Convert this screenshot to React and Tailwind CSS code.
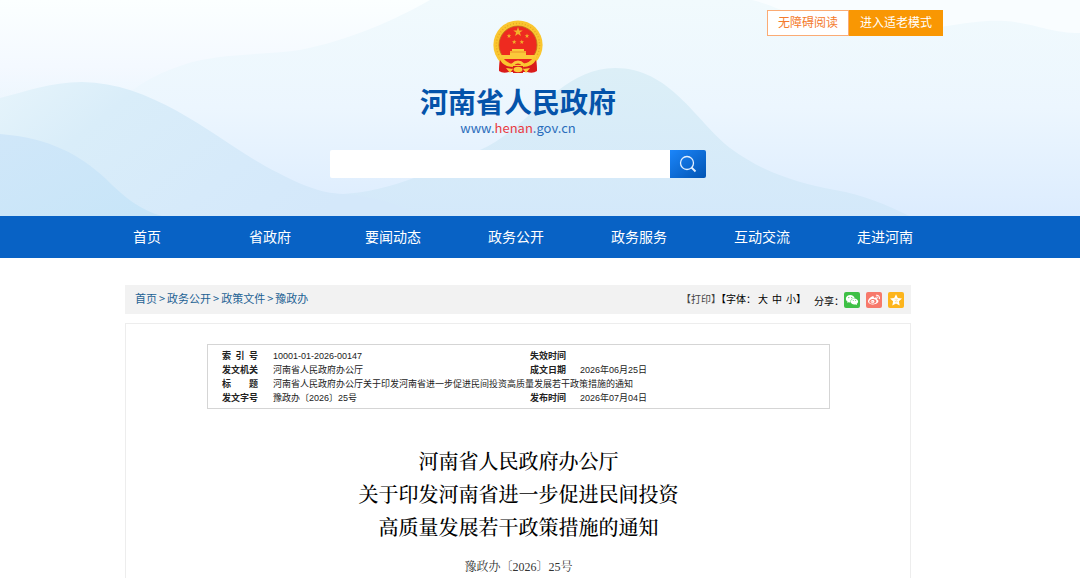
import React from 'react';
import { AiFillWechat } from 'react-icons/ai';
import { FaWeibo } from 'react-icons/fa';

const NAV = ['首页', '省政府', '要闻动态', '政务公开', '政务服务', '互动交流', '走进河南'];
const CRUMBS = ['首页', '政务公开', '政策文件', '豫政办'];

const Star = ({ x, y, r }) => {
  const pts = Array.from({ length: 10 }, (_, i) => {
    const a = (Math.PI / 5) * i - Math.PI / 2;
    const d = i % 2 ? r * 0.4 : r;
    return `${x + d * Math.cos(a)},${y + d * Math.sin(a)}`;
  }).join(' ');
  return <polygon points={pts} />;
};

const Emblem = () => (
  <svg viewBox="0 0 50 54" className="w-[50px] h-[54px]" role="img" aria-label="国徽">
    <path d="M7 36 L43 36 L44 51 Q40 54 34 52 L16 52 Q10 54 6 51 Z" fill="#dd1c1c" />
    <circle cx="25" cy="25" r="24.6" fill="#fac62f" />
    <circle cx="25" cy="25" r="21.6" fill="none" stroke="#e9a821" strokeWidth="1.4" strokeDasharray="1 2" />
    <circle cx="25" cy="25" r="19" fill="#ee2a20" stroke="#b9731b" strokeWidth="0.8" />
    <g fill="#f3b32b">
      <Star x={25} y={12} r={5} />
      <Star x={16} y={16} r={2.4} />
      <Star x={34} y={16} r={2.4} />
      <Star x={21.2} y={22} r={2.4} />
      <Star x={28.8} y={22} r={2.4} />
    </g>
    <path d="M19 29 h12 v2 h2 v4 h11 l-1 4 H7 l-1 -4 h11 v-4 h2 z" fill="#fbc93a" />
    <path d="M17 32 h16" stroke="#e57d22" strokeWidth="0.7" />
    <path d="M10 39 h30 l-5 4 -5 2 h-10 l-6 -2 z" fill="#e9251f" />
    <path d="M8 38 Q14 46 21 45 M42 38 Q36 46 29 45" fill="none" stroke="#fac62f" strokeWidth="3" />
    <path d="M7 40 Q11 47 20 47 L19 52 H10 L6 50 Z M43 40 Q39 47 30 47 L31 52 H40 L44 50 Z" fill="#d91b1b" />
    <path d="M20 46 h10 v7 h-10 z" fill="#d91b1b" />
    <path d="M20 44.5 Q22 42 25 42 Q28 42 30 44.5" fill="none" stroke="#fbc93a" strokeWidth="3" />
    <ellipse cx="25" cy="49.5" rx="4.4" ry="2.8" fill="#fbc93a" />
    <path d="M13 48 L20 49 L17 53 Z M37 48 L30 49 L33 53 Z" fill="#fbc93a" />
  </svg>
);

const Waves = () => (
  <svg viewBox="0 0 1080 216" preserveAspectRatio="none" className="absolute inset-0 w-full h-full" aria-hidden="true">
    <defs>
      <linearGradient id="sky" x1="0" y1="0" x2="0" y2="1">
        <stop offset="0" stopColor="#f1fafd" />
        <stop offset="0.5" stopColor="#ecf6fe" />
        <stop offset="1" stopColor="#dcecfe" />
      </linearGradient>
      <linearGradient id="mist" x1="0" y1="0" x2="0" y2="1">
        <stop offset="0" stopColor="#fbffff" />
        <stop offset="0.6" stopColor="#f4f9ff" />
        <stop offset="1" stopColor="#f1f7ff" stopOpacity="0" />
      </linearGradient>
      <linearGradient id="hill" x1="0" y1="0" x2="0" y2="1">
        <stop offset="0" stopColor="#dceff7" />
        <stop offset="1" stopColor="#d3e8fa" />
      </linearGradient>
      <linearGradient id="hillLeft" x1="0" y1="0" x2="1" y2="0.4">
        <stop offset="0" stopColor="#e6f4fb" />
        <stop offset="0.3" stopColor="#d9edf9" />
        <stop offset="0.7" stopColor="#d6eafa" />
        <stop offset="1" stopColor="#d4e8fa" />
      </linearGradient>
      <linearGradient id="front" x1="0" y1="0" x2="1" y2="1">
        <stop offset="0" stopColor="#d0e7f9" />
        <stop offset="1" stopColor="#c7e5f8" />
      </linearGradient>
    </defs>
    <rect width="1080" height="216" fill="url(#sky)" />
    <path d="M0 0 H430 C395 20 350 40 300 50 C255 56 215 53 180 66 C150 76 130 90 110 110 H0 Z" fill="url(#mist)" />
    <path d="M752 0 C775 5 805 25 865 31 C925 36 960 19 1005 21 C1035 23 1050 33 1080 33 V0 Z" fill="#f9fdff" />
    <path d="M300 185 C320 193 330 194 343 194 C390 192 440 168 480 150 C530 128 560 68 615 68 C670 68 695 120 730 148 C765 174 800 183 835 190 C870 196 900 211 925 224 H300 Z" fill="url(#hill)" />
    <path d="M0 98 C25 92 50 82 82 82 C155 83 215 138 265 166 C300 185 320 193 343 194 C380 197 400 205 420 216 H0 Z" fill="url(#hillLeft)" />
    <path d="M0 134 C50 138 80 155 105 178 C125 198 140 210 162 216 H0 Z" fill="url(#front)" />
  </svg>
);

const Label = ({ children }) => (
  <th scope="row" className="w-9 p-0 font-bold [text-align-last:justify] whitespace-nowrap">{children}</th>
);

export default function App() {
  return (
    <div className="bg-white text-[#222] font-['Liberation_Sans','Noto_Sans_CJK_SC',sans-serif]">
      <header className="relative h-[216px] pr-11 font-['Noto_Sans_CJK_SC',sans-serif]">
        <Waves />
        <div className="relative max-w-[850px] mx-auto">
          <div className="absolute right-0 top-[10px] z-10 flex text-xs">
            <button className="px-[10px] pb-0.5 h-[26px] border border-[#fbab74] bg-white text-[#f47a2c]">无障碍阅读</button>
            <button className="px-[11px] pb-0.5 h-[26px] bg-[#f99703] text-white">进入适老模式</button>
          </div>
        </div>
        <div className="relative flex flex-col items-center pt-5">
          <Emblem />
          <h1 className="mt-[11px] text-[28px] leading-[33px] font-bold text-[#0453aa]">河南省人民政府</h1>
          <a href="#" className="text-[13px] leading-5 text-[#2a6dbb]">
            www.<span className="text-[#e83a42]">henan</span>.gov.cn
          </a>
          <form className="mt-3 flex w-full max-w-[376px] h-7" onSubmit={(e) => e.preventDefault()}>
            <input type="text" aria-label="搜索" className="flex-1 min-w-0 px-2 bg-white rounded-l-xs text-sm outline-none" />
            <button aria-label="搜索" className="w-9 flex items-center justify-center rounded-r-xs bg-linear-to-br from-[#1b86fb] to-[#0254b3]">
              <svg viewBox="0 0 18 18" className="w-[18px] h-[18px]" fill="none" stroke="#e4f0ff" strokeWidth="1.3">
                <circle cx="8" cy="8" r="6.5" />
                <path d="M12.5 12.5 L16.5 16.5" strokeWidth="1.8" />
              </svg>
            </button>
          </form>
        </div>
      </header>

      <nav className="bg-[#0862c5] pr-12 pb-0.5 font-['Noto_Sans_CJK_SC',sans-serif]">
        <ul className="max-w-[861px] mx-auto grid grid-cols-7 text-center text-sm leading-10 text-white">
          {NAV.map((item) => (
            <li key={item}><a href="#">{item}</a></li>
          ))}
        </ul>
      </nav>

      <main className="pt-[27px] pr-11">
        <div className="max-w-[786px] mx-auto">
          <div className="flex items-center justify-between h-[29px] pl-[10px] pr-[7px] bg-[#f2f2f2] font-['Noto_Sans_CJK_SC',sans-serif]">
            <div className="flex gap-[2px] pb-0.5 text-[11px] text-[#1d6294]">
              {CRUMBS.map((c, i) => (
                <React.Fragment key={c}>
                  {i > 0 && <span>&gt;</span>}
                  <a href="#">{c}</a>
                </React.Fragment>
              ))}
            </div>
            <div className="flex items-center text-[10px] text-black">
              <div className="flex pb-0.5">
                <span className="mr-[2px]"><a href="#" className="text-[#444]">【打印】</a>【字体：</span>
                <span className="flex gap-1">
                  <button>大</button>
                  <button>中</button>
                  <button>小</button>
                </span>
                <span>】</span>
              </div>
              <span className="ml-2 pt-0.5">分享：</span>
              <span className="flex gap-[6px]">
                <a href="#" aria-label="微信" className="w-4 h-4 flex items-center justify-center rounded-xs bg-[#3ec045] text-white">
                  <AiFillWechat size={14} />
                </a>
                <a href="#" aria-label="微博" className="w-4 h-4 flex items-center justify-center rounded-xs bg-[#f7796b] text-white">
                  <FaWeibo size={12} />
                </a>
                <a href="#" aria-label="QQ空间" className="w-4 h-4 flex items-center justify-center rounded-xs bg-[#fdb51c] text-white">
                  <svg viewBox="0 0 24 24" className="w-3 h-3" fill="currentColor">
                    <path d="M12 0.5 L15.6 8 L24 9 L17.8 14.6 L19.4 23 L12 19 L4.6 23 L6.2 14.6 L0 9 L8.4 8 Z" />
                    <path d="M9 10.5 H15 L10 15.5 H16" fill="none" stroke="#fdb51c" strokeWidth="0.8" />
                  </svg>
                </a>
              </span>
            </div>
          </div>

          <article className="mt-[9px] pl-[81px] pr-20 pt-5 pb-0.5 border border-b-0 border-[#ededed]">
            <div className="border border-[#d5d5d5] pt-1 pb-[3px] pl-[14px]">
              <table className="w-full table-fixed border-collapse text-left text-[9px] leading-[14px]">
                <colgroup>
                  <col className="w-9" />
                  <col className="w-[272px]" />
                  <col className="w-9" />
                  <col />
                </colgroup>
                <tbody>
                  <tr>
                    <Label>索 引 号</Label>
                    <td className="py-0 pl-[15px]">10001-01-2026-00147</td>
                    <Label>失效时间</Label>
                    <td className="py-0 pl-[14px]"></td>
                  </tr>
                  <tr>
                    <Label>发文机关</Label>
                    <td className="py-0 pl-[15px]">河南省人民政府办公厅</td>
                    <Label>成文日期</Label>
                    <td className="py-0 pl-[14px]">2026年06月25日</td>
                  </tr>
                  <tr>
                    <Label>标 题</Label>
                    <td colSpan={3} className="py-0 pl-[15px]">河南省人民政府办公厅关于印发河南省进一步促进民间投资高质量发展若干政策措施的通知</td>
                  </tr>
                  <tr>
                    <Label>发文字号</Label>
                    <td className="py-0 pl-[15px]">豫政办〔2026〕25号</td>
                    <Label>发布时间</Label>
                    <td className="py-0 pl-[14px]">2026年07月04日</td>
                  </tr>
                </tbody>
              </table>
            </div>

            <div className="text-center text-black font-['Liberation_Serif','Noto_Serif_CJK_SC','Noto_Sans_CJK_SC',serif]">
              <h2 className="mt-[37px] text-xl leading-[33px] font-medium">
                河南省人民政府办公厅<br />
                关于印发河南省进一步促进民间投资<br />
                高质量发展若干政策措施的通知
              </h2>
              <p className="mt-3 text-xs leading-5 text-[#333]">豫政办〔2026〕25号</p>
            </div>
          </article>
        </div>
      </main>
    </div>
  );
}
